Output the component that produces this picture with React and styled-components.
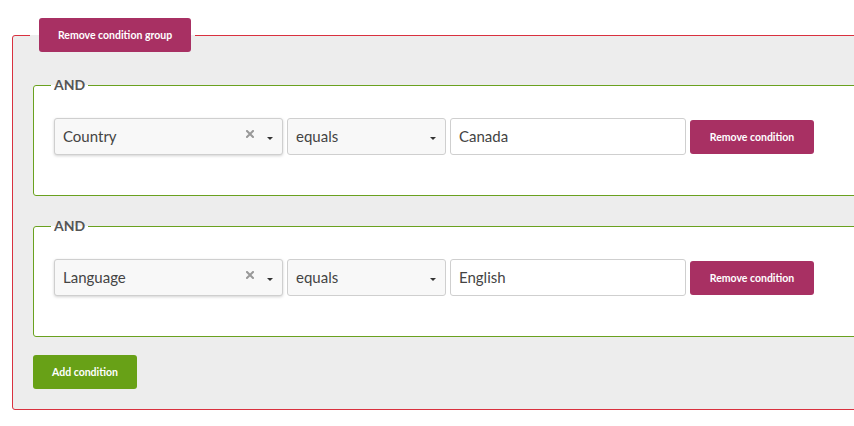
import React from "react";
import styled, { createGlobalStyle } from "styled-components";

const Global = createGlobalStyle`
  html, body { margin: 0; padding: 0; background: #fff; overflow: hidden; }
  body { font-family: Lato, "Open Sans", sans-serif; color: #444; }
  * { box-sizing: border-box; }
`;

const Page = styled.div`
  width: 960px;
  padding: 18px 0 0 12px;
`;

const GroupSet = styled.fieldset`
  margin: 0;
  padding: 24px 20px 20px 20px;
  border: 1px solid #d9313f;
  border-radius: 3px;
  background: #ededed;
  min-width: 0;
`;

const GroupLegend = styled.legend`
  margin-left: -3px;
  padding: 0 4px 0 9px;
  line-height: 0;
`;

const Button = styled.button`
  display: inline-flex;
  align-items: center;
  justify-content: center;
  height: 34px;
  width: ${(p) => p.$w}px;
  padding: 0;
  border: none;
  border-radius: 3px;
  background: ${(p) => (p.$green ? "#68a117" : "#a83063")};
  color: #fff;
  font-family: Lato, "Open Sans", sans-serif;
  font-weight: 700;
  font-size: 10.5px;
  cursor: pointer;
`;

const CondSet = styled.fieldset`
  margin: 0 0 ${(p) => (p.$last ? 18 : 21)}px 0;
  padding: 24px 20px 40px 20px;
  border: 1px solid #6aa11f;
  border-radius: 3px;
  background: #fff;
  min-width: 0;
`;

const CondLegend = styled.legend`
  margin-left: -3px;
  padding: 0 3px;
  font-size: 14px;
  line-height: 18px;
  font-weight: 700;
  color: #555;
`;

const Row = styled.div`
  display: flex;
  align-items: center;
  gap: 4px;
  height: 37px;
`;

const Select = styled.div`
  display: flex;
  align-items: center;
  width: ${(p) => p.$w}px;
  height: 37px;
  padding: 0 8px 2px;
  border: 1px solid #cfcfcf;
  border-radius: 3px;
  background: #f8f8f8;
  box-shadow: ${(p) => (p.$focus ? "0 1px 3px rgba(0,0,0,0.18)" : "none")};
  font-size: 15px;
  color: #444;
`;

const Value = styled.span`
  flex: 1;
  white-space: nowrap;
`;

const Clear = styled.svg`
  width: 8px;
  height: 8px;
  margin-right: 13px;
  margin-top: -3px;
`;

const Caret = styled.span`
  width: 0;
  height: 0;
  margin-right: 1px;
  margin-top: 5px;
  border-left: 3px solid transparent;
  border-right: 3px solid transparent;
  border-top: 3px solid #333;
`;

const Input = styled.input`
  width: 236px;
  height: 37px;
  padding: 0 8px 2px;
  border: 1px solid #cfcfcf;
  border-radius: 3px;
  background: #fff;
  font-family: Lato, "Open Sans", sans-serif;
  font-size: 15px;
  color: #444;
  outline: none;
`;

function Condition({ field, value, last }) {
  return (
    <CondSet $last={last}>
      <CondLegend>AND</CondLegend>
      <Row>
        <Select $w={229} $focus>
          <Value>{field}</Value>
          <Clear viewBox="0 0 8 8">
            <path d="M1 1L7 7M7 1L1 7" stroke="#999" strokeWidth="2" strokeLinecap="square" />
          </Clear>
          <Caret />
        </Select>
        <Select $w={159}>
          <Value>equals</Value>
          <Caret />
        </Select>
        <Input defaultValue={value} />
        <Button $w={124}>Remove condition</Button>
      </Row>
    </CondSet>
  );
}

export default function App() {
  return (
    <>
      <Global />
      <Page>
        <GroupSet>
          <GroupLegend>
            <Button $w={152}>Remove condition group</Button>
          </GroupLegend>
          <Condition field="Country" value="Canada" />
          <Condition field="Language" value="English" last />
          <Button $w={104} $green>Add condition</Button>
        </GroupSet>
      </Page>
    </>
  );
}
